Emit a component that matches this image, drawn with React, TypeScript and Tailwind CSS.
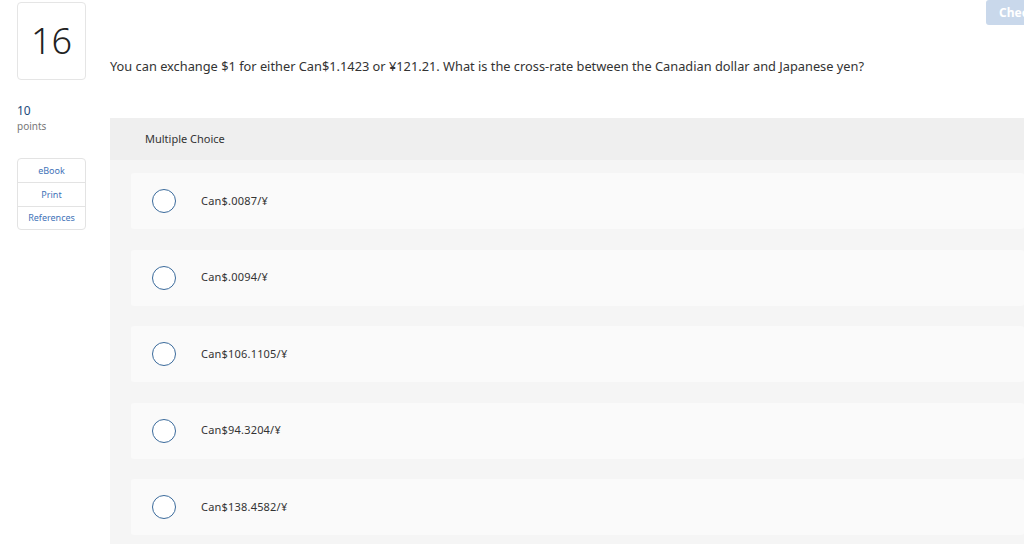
import React from "react";

const choices = [
  "Can$.0087/¥",
  "Can$.0094/¥",
  "Can$106.1105/¥",
  "Can$94.3204/¥",
  "Can$138.4582/¥",
];

export default function App() {
  return (
    <div
      className="relative h-[544px] w-[1024px] overflow-hidden bg-white text-[#333]"
      style={{ fontFamily: "'Noto Sans', Arial, sans-serif" }}
    >
      {/* Check button, runs off the right edge */}
      <button className="absolute right-[-30px] top-0 h-[25px] w-[68px] rounded-[3px] bg-[#c9d8eb] pl-[13px] text-left text-[12px] font-bold text-white">
        Check
      </button>

      <div className="flex">
        {/* Left rail */}
        <div className="w-[110px] shrink-0 pl-[17px]">
          <div className="mt-[2px] flex h-[78px] w-[69px] items-center justify-center rounded-[4px] border border-[#e5e5e5]">
            <span className="text-[36px] font-light leading-none text-[#222]">16</span>
          </div>
          <div className="mt-[24px] text-[12px] leading-[14px] text-[#1e4a7c]">10</div>
          <div className="mt-[2px] text-[10px] leading-[12px] text-[#777]">points</div>
          <div className="mt-[26px] w-[69px] rounded-[4px] border border-[#e3e3e3] text-center text-[9px] text-[#3f73b8]">
            <div className="flex h-[24px] items-center justify-center border-b border-[#e3e3e3]">eBook</div>
            <div className="flex h-[24px] items-center justify-center border-b border-[#e3e3e3]">Print</div>
            <div className="flex h-[22px] items-center justify-center">References</div>
          </div>
        </div>

        {/* Main */}
        <div className="flex-1">
          <div className="flex h-[118px] items-start pt-[57px] text-[12.8px] leading-[18px] text-[#333]">
            You can exchange $1 for either Can$1.1423 or ¥121.21. What is the cross-rate between the Canadian dollar and Japanese yen?
          </div>
          <div className="bg-[#f5f5f5]">
            <div className="flex h-[42px] items-center bg-[#efefef] pl-[35px] text-[11px] text-[#333]">
              Multiple Choice
            </div>
            <div className="flex flex-col gap-[20.5px] pb-[20px] pl-[21px] pt-[13px]">
              {choices.map((c) => (
                <div key={c} className="flex h-[56px] items-center rounded-[3px] bg-[#fafafa]">
                  <span className="ml-[21px] h-[24px] w-[24px] shrink-0 rounded-full border-[1.5px] border-[#3a6a9b] bg-white" />
                  <span className="ml-[25px] text-[11px] tracking-[0.2px] text-[#333]">{c}</span>
                </div>
              ))}
            </div>
          </div>
        </div>
      </div>
    </div>
  );
}
